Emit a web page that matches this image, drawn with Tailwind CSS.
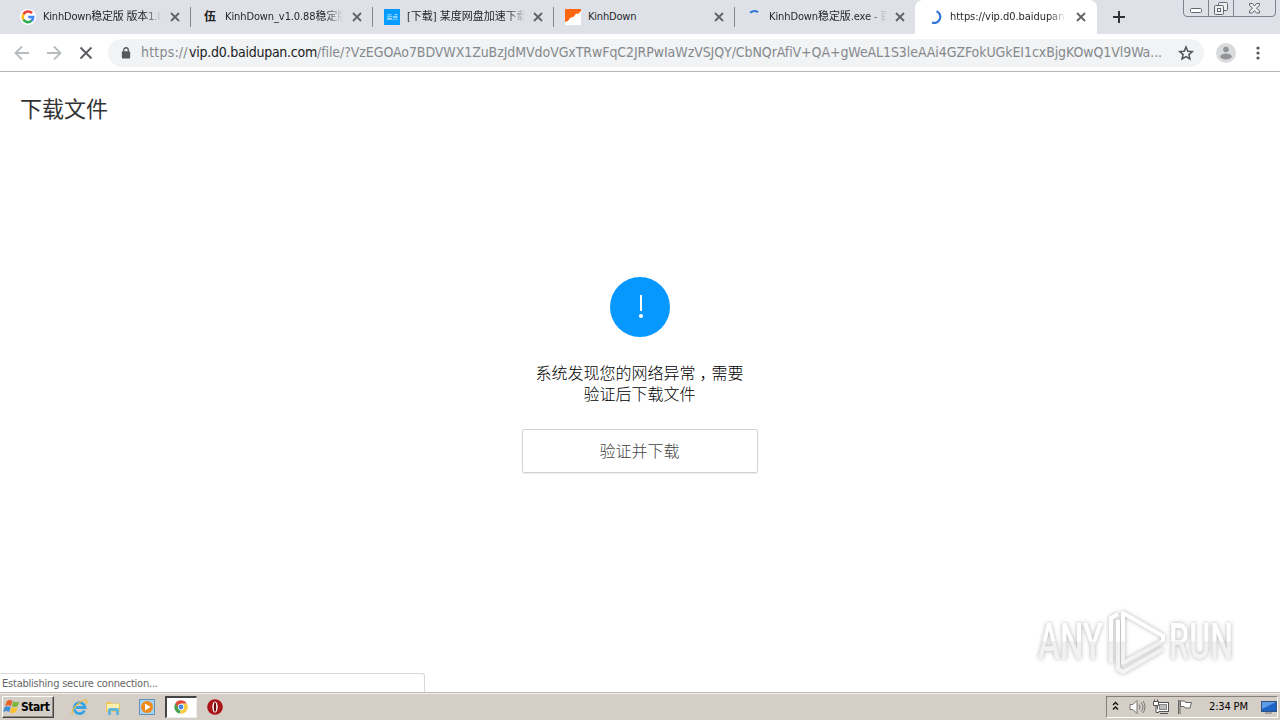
<!DOCTYPE html>
<html lang="zh-CN">
<head>
  <meta charset="UTF-8" />
  <meta name="viewport" content="width=device-width, initial-scale=1.0" />
  <title>下载文件</title>
  <script src="https://cdn.jsdelivr.net/npm/@tailwindcss/browser@4"></script>
</head>
<body class="w-[1280px] h-[720px] overflow-hidden flex flex-col bg-white font-['DejaVu_Sans_Condensed','Noto_Sans','Noto_Sans_CJK_SC',sans-serif] text-[#333]">
  <svg class="hidden">
    <symbol id="close" viewBox="0 0 10 10"><path d="M1 1l8 8M9 1L1 9" stroke="#5f6368" stroke-width="1.8" fill="none" /></symbol>
    <symbol id="google" viewBox="0 0 16 16" fill="none" stroke-width="2.6">
      <path d="M12 4.200A5.300 5.300 0 0 0 3.400 5.400" stroke="#ea4335" />
      <path d="M3.400 5.400a5.300 5.300 0 0 0 0 5.200" stroke="#fbbc05" />
      <path d="M3.400 10.600a5.300 5.300 0 0 0 8.100 1.200" stroke="#34a853" />
      <path d="M11.500 11.800A5.300 5.300 0 0 0 13.200 8H8.200" stroke="#4285f4" />
    </symbol>
  </svg>

  <!-- Tab strip -->
  <header class="relative h-[34px] shrink-0 bg-[#dee1e8] flex pl-[9px] text-[11px] leading-4 tracking-[-0.2px] text-[#25282c]">
    <div class="w-[182px] h-full flex items-center pl-[11px]">
      <span class="w-4 h-4 bg-white rounded-full shrink-0"><svg class="w-4 h-4"><use href="#google" /></svg></span>
      <span class="ml-[7px] w-[119px] overflow-hidden whitespace-nowrap mask-r-from-85%">KinhDown稳定版 版本1.0</span>
      <svg class="ml-[8px] w-[10px] h-[10px] shrink-0"><use href="#close" /></svg>
      <span class="ml-auto w-px h-5 bg-[#85888e]"></span>
    </div>
    <div class="w-[182px] h-full flex items-center pl-[11px]">
      <span class="w-4 pl-[2px] text-[12px] font-bold text-[#222] shrink-0">伍</span>
      <span class="ml-[7px] w-[118px] overflow-hidden whitespace-nowrap tracking-[-0.1px] mask-r-from-85%">KinhDown_v1.0.88稳定版</span>
      <svg class="ml-[9px] w-[10px] h-[10px] shrink-0"><use href="#close" /></svg>
      <span class="ml-auto w-px h-5 bg-[#85888e]"></span>
    </div>
    <div class="w-[181px] h-full flex items-center pl-[11px]">
      <span class="w-4 h-4 bg-[#069cff] shrink-0 text-[#d5efff] text-[6px] leading-[15px] text-center whitespace-nowrap">蓝点</span>
      <span class="ml-[7px] w-[118px] overflow-hidden whitespace-nowrap tracking-normal mask-r-from-85%">[下载] 某度网盘加速下载</span>
      <svg class="ml-[8px] w-[10px] h-[10px] shrink-0"><use href="#close" /></svg>
      <span class="ml-auto w-px h-5 bg-[#85888e]"></span>
    </div>
    <div class="w-[181px] h-full flex items-center pl-[11px]">
      <svg class="w-4 h-4 shrink-0" viewBox="0 0 16 16"><path fill="#fff" d="M0 0h16v16H0z" /><path fill="#ff6610" d="M0 0h16v2l-3 3-2-.5-2 3-4 1.500L3 12l-3 1z" /></svg>
      <span class="ml-[7px] w-[118px] overflow-hidden whitespace-nowrap">KinhDown</span>
      <svg class="ml-[8px] w-[10px] h-[10px] shrink-0"><use href="#close" /></svg>
      <span class="ml-auto w-px h-5 bg-[#85888e]"></span>
    </div>
    <div class="w-[180px] h-full flex items-center pl-[11px]">
      <svg class="w-4 h-4 shrink-0" viewBox="0 0 16 16" fill="none" stroke="#3277d5" stroke-width="2"><path d="M4 3.8Q8 .5 12 3.200" /></svg>
      <span class="ml-[7px] w-[118px] overflow-hidden whitespace-nowrap tracking-[-0.1px] mask-r-from-85%">KinhDown稳定版.exe - 百</span>
      <svg class="ml-[8px] w-[10px] h-[10px] shrink-0"><use href="#close" /></svg>
    </div>
    <div class="w-[182px] h-full flex items-center pl-[12px] bg-white rounded-t-lg">
      <svg class="w-4 h-4 shrink-0" viewBox="0 0 16 16" fill="none" stroke="#3277d5" stroke-width="2.2"><path d="M9.500 2.300A6 6 0 0 1 5 13.500" /></svg>
      <span class="ml-[7px] w-[116px] overflow-hidden whitespace-nowrap tracking-[-0.05px] mask-r-from-85%">https://vip.d0.baidupan.com</span>
      <svg class="ml-[10px] w-[10px] h-[10px] shrink-0"><use href="#close" /></svg>
    </div>
    <svg class="w-3 h-3 ml-[16px] mt-[11px]" viewBox="0 0 12 12"><path d="M6 0v12M0 6h12" stroke="#2f3338" stroke-width="2" /></svg>

    <!-- Window buttons -->
    <svg class="absolute top-0 right-[3px] w-[94px] h-[18px]" viewBox="0 0 94 18" fill="none" stroke="#7e828b">
      <path d="M.5 0v13q0 3.500 3.500 3.500h85q3.500 0 3.500-3.500V0M25.500 0v16M50.500 0v16" />
      <g stroke="#62666e"><rect x="7.500" y="8.500" width="11" height="4" rx="1" fill="#fff" /><rect x="35.500" y="2.500" width="9" height="8" rx="1" fill="#eee" /><rect x="31.500" y="5.500" width="9" height="9" rx="1" fill="#eee" /><rect x="34.500" y="8.500" width="3" height="3" fill="#fff" /><path d="M66.500 3.500h3l2 2.500 2-2.500h3v2L73.500 8l3 3v2h-3l-2-2.500-2 2.500h-3v-2l3-3-3-2.500z" fill="#eee" /></g>
    </svg>
  </header>

  <!-- Toolbar -->
  <div class="h-[38px] shrink-0 border-b border-[#b4b5b4] flex items-center pl-[14px]">
    <svg class="w-4 h-4" viewBox="0 0 16 16" fill="none" stroke="#b8bbbd" stroke-width="1.8"><path d="M15 8H2M8 1.500L1.500 8 8 14.500" /></svg>
    <svg class="w-4 h-4 ml-4" viewBox="0 0 16 16" fill="none" stroke="#b8bbbd" stroke-width="1.8"><path d="M1 8h13M8 1.500L14.500 8 8 14.500" /></svg>
    <svg class="w-4 h-4 ml-4" viewBox="0 0 16 16" fill="none" stroke="#5b5e62" stroke-width="1.9"><path d="M2.500 2.500l11 11M13.500 2.500l-11 11" /></svg>
    <div class="ml-[14px] w-[1096px] h-7 rounded-full bg-[#f1f3f4] flex items-center pl-[13px] text-[14px] text-[#85898d]">
      <svg class="w-[10px] h-[12px]" viewBox="0 0 10 13"><path d="M2.500 5V3.300a2.500 2.500 0 0 1 5 0V5" fill="none" stroke="#55585c" stroke-width="1.400" /><rect x=".5" y="4.500" width="9" height="8" rx="1" fill="#55585c" /></svg>
      <div class="ml-[10px] w-[1022px] flex whitespace-nowrap">
        <span class="w-[48px] tracking-[0.2px]">https://</span><span class="w-[128px] text-[#202124] tracking-[-0.25px]">vip.d0.baidupan.com</span><span class="tracking-[-0.08px]">/file/?VzEGOAo7BDVWX1ZuBzJdMVdoVGxTRwFqC2JRPwIaWzVSJQY/CbNQrAfiV+QA+gWeAL1S3leAAi4GZFokUGkEI1cxBjgKOwQ1Vl9Wa...</span>
      </div>
      <svg class="ml-[15px] w-4 h-4" viewBox="0 0 16 16"><path d="M8 2l1.800 4.200 4.500.4-3.400 3 1 4.400L8 11.700l-3.900 2.300 1-4.400-3.400-3 4.500-.4z" fill="none" stroke="#505458" stroke-width="1.500" /></svg>
    </div>
    <svg class="ml-[12px] w-5 h-5" viewBox="0 0 20 20"><circle cx="10" cy="10" r="10" fill="#d9dadb" /><circle cx="10" cy="6.500" r="2.800" fill="#929497" /><ellipse cx="10" cy="13.500" rx="5.800" ry="2.900" fill="#929497" /></svg>
    <svg class="ml-[20px] w-1 h-[14px]" viewBox="0 0 4 14" fill="#54575b"><circle cx="2" cy="2" r="1.600" /><circle cx="2" cy="7" r="1.600" /><circle cx="2" cy="12" r="1.600" /></svg>
  </div>

  <!-- Page -->
  <main class="relative flex-1 flex flex-col items-center font-['Noto_Sans_CJK_SC',sans-serif]">
    <h1 class="self-start ml-[20px] mt-[20px] text-[22px] leading-[30px] text-[#333]">下载文件</h1>
    <svg class="mt-[155px] w-[60px] h-[60px] shrink-0" viewBox="0 0 60 60"><circle cx="30" cy="30" r="30" fill="#0698ff" /><path d="M31 18v16" stroke="#fff" stroke-width="2" /><circle cx="31" cy="39" r="2.100" fill="#fff" /></svg>
    <p class="mt-[25px] mr-px text-[16px] leading-[21px] text-center font-light text-black whitespace-nowrap">系统发现您的网络异常<span class="relative left-1">，</span>需要<br>验证后下载文件</p>
    <button class="mt-[25px] w-[236px] h-[44px] pb-[2px] pr-px border border-[#d2d2d2] rounded-[2px] shadow-[0_1px_1px_#eee] text-[16px] font-light text-[#444]">验证并下载</button>

    <!-- Watermark -->
    <svg class="absolute left-[1030px] top-[532px] w-[212px] h-[76px] drop-shadow-[0_0_2px_rgba(0,0,0,0.3)]" viewBox="0 0 212 76">
      <defs><linearGradient id="fade" gradientUnits="userSpaceOnUse" x1="0" y1="0" x2="0" y2="76"><stop offset=".48" stop-color="#fff" /><stop offset=".5" stop-color="#f0f0f0" /><stop offset="1" stop-color="#f6f6f6" /></linearGradient></defs>
      <g fill="url(#fade)" font-family="Roboto, sans-serif" font-size="50" font-weight="500">
        <text x="8" y="55" textLength="65" lengthAdjust="spacingAndGlyphs">ANY</text>
        <text x="139" y="55" textLength="64" lengthAdjust="spacingAndGlyphs">RUN</text>
      </g>
      <g fill="none" stroke="url(#fade)" stroke-width="4" stroke-linejoin="round"><path d="M88 16v49l5 3 40-23" /><path d="M93 9l40 23v5L93 59z" /><path d="M81 59V14l7-4" /></g>
    </svg>

    <div class="absolute left-0 bottom-0 w-[425px] h-[19px] border-t border-r border-[#d9d9d9] rounded-tr-[3px] bg-white pl-[2px] font-['DejaVu_Sans_Condensed',sans-serif] text-[11px] leading-[19px] tracking-[-0.22px] text-[#666]">Establishing secure connection...</div>
  </main>

  <!-- Taskbar -->
  <footer class="h-[28px] shrink-0 bg-[#d5cec6] border-t border-[#bdbab2] shadow-[inset_0_1px_#f3f0ec] flex items-start pl-[2px] text-black">
    <div class="mt-[3px] w-[52px] h-[22px] border border-t-white border-l-white border-r-[#444] border-b-[#444] flex items-center shadow-[inset_-1px_-1px_#8d8982]">
      <svg class="w-[17px] h-4 shrink-0" viewBox="0 0 17 16"><path d="M4 2q3-2 5.500 0L8 7q-3-1.500-6 0z" fill="#e8622b" /><path d="M10.300 2.300q3 2 6 0L14.800 7q-3 2-6 .3z" fill="#79b63c" /><path d="M1.700 8q3-1.500 6 0L6.200 13q-3-2-6 0z" fill="#3e8fd8" /><path d="M8.500 8.300q3 1.500 6 0L13 13q-3 2-6 .5z" fill="#f9c22e" /></svg>
      <span class="ml-px text-[12px] leading-4 font-bold tracking-[-0.45px]">Start</span>
    </div>
    <svg class="ml-[17px] mt-[6px] w-[17px] h-[17px]" viewBox="0 0 17 17" fill="none"><path d="M13.500 11.500A5.500 5.500 0 1 1 14 8.500H5" stroke="#38a4e4" stroke-width="2.800" /><path d="M1.500 15.500C-1 11 9 1 15 1.200q2 .8-.2 4" stroke="#edbd3c" stroke-width="1.300" /></svg>
    <svg class="ml-[17px] mt-[6px] w-[16px] h-[17px]" viewBox="0 0 16 17"><path d="M1 3h5l1 1.500h8V13H1z" fill="#e9c863" /><path d="M2 5h12v6H2z" fill="#fbefae" /><path d="M3 16v-5q0-2 2-2h7q2 0 2 2v5h-3v-4H6v4z" fill="#62b5dd" /></svg>
    <svg class="ml-[18px] mt-[6px] w-[16px] h-[17px]" viewBox="0 0 16 17"><rect x=".5" y=".5" width="15" height="15" fill="#a9d0ed" stroke="#5b93c2" /><circle cx="8" cy="8" r="6" fill="#f08a1a" /><path d="M6 4.500v7L11.500 8z" fill="#fff" /></svg>
    <div class="ml-[10px] mt-[3px] w-[32px] h-[22px] bg-white border-t-2 border-l-2 border-t-[#444] border-l-[#444] border-r border-b border-r-[#eee] border-b-[#eee] pl-[7px] pt-[2px]">
      <svg class="w-[14px] h-[14px]" viewBox="0 0 16 16"><path d="M8 8L1.500 4A7.500 7.500 0 0 0 7 15.500z" fill="#4aa354" /><path d="M8 8L7 15.500A7.500 7.500 0 0 0 14.500 4H8z" fill="#f7ce42" /><path d="M1.500 4A7.500 7.500 0 0 1 14.500 4H8v4H4z" fill="#df4c3c" /><circle cx="8" cy="8" r="3.600" fill="#fff" /><circle cx="8" cy="8" r="2.800" fill="#4587e8" /></svg>
    </div>
    <svg class="ml-[10px] mt-[6px] w-4 h-4" viewBox="0 0 16 16"><circle cx="8" cy="8" r="7.800" fill="#a91317" /><ellipse cx="8" cy="8" rx="2.700" ry="5.500" fill="#fff" /><ellipse cx="8" cy="8" rx="1.200" ry="4.800" fill="#6d0a0c" /></svg>

    <div class="ml-auto mr-[2px] mt-[3px] w-[172px] h-[22px] border border-t-[#85817a] border-l-[#85817a] border-r-white border-b-white flex items-center pl-[5px]">
      <svg class="w-[7px] h-[10px] mb-[2px]" viewBox="0 0 7 10" fill="none" stroke="#111" stroke-width="1.400"><path d="M1 4l2.500-2.500L6 4M1 8.500L3.500 6 6 8.500" /></svg>
      <svg class="ml-[10px] w-[17px] h-[16px]" viewBox="0 0 17 16" fill="none" stroke="#777"><path d="M1 5.500h3l4-4v13l-4-4H1z" fill="#fff" /><path d="M10 5.500q2 2.500 0 5M12 3.500q4 4.500 0 9M14 2q4 6 0 12" /></svg>
      <svg class="ml-[7px] w-[17px] h-[16px]" viewBox="0 0 17 16" stroke="#555" fill="#fff"><rect x="4.500" y="3.500" width="11" height="9" /><rect x="6.500" y="5.500" width="7" height="5" fill="#bbb" stroke="#888" /><path d="M7 14.500h8" /><path d="M.5 2.500h5v4h-5zM1.500.500v2M4.500.500v2M3 7v6.500h3" /></svg>
      <svg class="ml-[7px] w-[16px] h-[16px]" viewBox="0 0 16 16" stroke="#666" fill="#fff"><path d="M1.500 1v14M3 1v14M3.500 2h4l1 1.500h6L13 9H8L7 7.500H3.500z" /></svg>
      <span class="ml-[16px] w-[43px] text-[11px] leading-4 whitespace-nowrap tracking-[-0.15px]">2:34 PM</span>
      <svg class="ml-[9px] w-[16px] h-[14px]" viewBox="0 0 16 14"><rect x=".5" y="1.500" width="15" height="10" fill="#1d63c4" stroke="#325380" /><path d="M1 2h14L1 9z" fill="#5d9ce6" /><path d="M4 13h7" stroke="#777" /></svg>
    </div>
  </footer>
</body>
</html>
